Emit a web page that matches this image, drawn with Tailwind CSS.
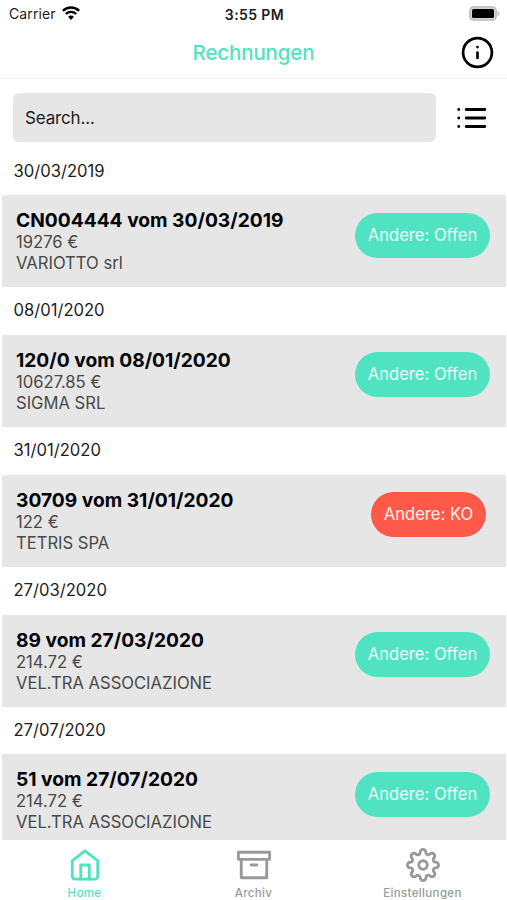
<!DOCTYPE html>
<html lang="de">
<head>
<meta charset="utf-8">
<title>Rechnungen</title>
<script src="https://cdn.jsdelivr.net/npm/@tailwindcss/browser@4"></script>
</head>
<body class="bg-white">
<div class="flex h-[900px] w-[507px] flex-col overflow-hidden bg-white font-['Inter','Liberation_Sans',sans-serif] text-[#1c1c1c]">
  <header class="h-[79px] shrink-0 border-b border-[#f0f0f0]">
    <div class="grid h-[27px] grid-cols-3 items-center pr-[7px] pl-[9px] text-[14px]">
      <div class="flex items-center gap-[6px]"><span class="tracking-[0.1px]">Carrier</span>
        <svg class="-mt-[2px] h-[14px] w-[18px]" viewBox="0 0 18 14" fill="none" stroke="#000" stroke-width="2.4"><path d="M.9 4.8a11.5 11.5 0 0 1 16.2 0M3.8 8a7.4 7.4 0 0 1 10.4 0"/><path d="M9 14 6.1 10.8a4.2 4.2 0 0 1 5.8 0z" fill="#000" stroke="none"/></svg>
      </div>
      <div class="pt-px text-center text-[14px] font-semibold tracking-[0.4px]">3:55 PM</div>
      <svg class="-mt-px h-[15px] w-[31px] justify-self-end" viewBox="0 0 31 15"><rect x=".8" y=".8" width="26.4" height="13.4" rx="3.8" fill="#d4d4d4" stroke="#b5b5b5" stroke-width="1.2"/><rect x="3" y="3" width="22" height="9" rx="1.5"/><path d="M28.6 5v5c2.4-.8 2.4-4.2 0-5z" fill="#b5b5b5"/></svg>
    </div>
    <div class="grid h-[51px] grid-cols-[1fr_auto_1fr] items-center pr-[13px] pl-[13px]">
      <span></span>
      <h1 class="pt-[2px] text-[20.5px] font-medium tracking-[-0.15px] text-[#50e3c2]">Rechnungen</h1>
      <svg class="h-[33px] w-[33px] justify-self-end" viewBox="0 0 33 33" fill="none" stroke="#000" stroke-width="2.7" stroke-linecap="round"><circle cx="16.5" cy="16.5" r="14.4"/><path d="M16.5 16.5v5.5M16.5 11v.1"/></svg>
    </div>
  </header>
  <div class="flex h-[68.6px] shrink-0 items-center pt-[9px] pr-[20px] pl-[13px]">
    <div class="flex h-[49px] w-[423px] items-center rounded-[6px] bg-[#e6e6e6] pt-[2px] pl-[12px] text-[17px] tracking-[-0.15px]">Search...</div>
    <svg class="ml-auto h-[30px] w-[31px]" viewBox="0 0 31 30" fill="none" stroke="#000" stroke-width="2.8" stroke-linecap="round"><path d="M10.2 6.5h18.6M10.2 15h18.6M10.2 23.5h18.6M2.7 6.5h.1M2.7 15h.1M2.7 23.5h.1"/></svg>
  </div>
  <main id="list" class="min-h-0 flex-1 overflow-hidden"></main>
  <nav class="grid h-[60px] shrink-0 grid-cols-3 bg-white text-[11.5px] font-medium tracking-[0.35px] text-[#999]">
    <div class="flex flex-col items-center pt-[7px] text-[#50e3c2]">
      <svg class="h-[36px] w-[34px]" viewBox="0 0 24 24" fill="none" stroke="currentColor" stroke-width="2" stroke-linecap="round" stroke-linejoin="round"><path d="M3 9l9-7 9 7v11a2 2 0 0 1-2 2H5a2 2 0 0 1-2-2z"/><path d="M9 22V12h6v10"/></svg>
      <span class="pt-px leading-[18px]">Home</span>
    </div>
    <div class="flex flex-col items-center pt-[7px]">
      <svg class="h-[36px] w-[34px]" viewBox="0 0 24 24" fill="none" stroke="currentColor" stroke-width="2" stroke-linecap="round" stroke-linejoin="round"><path d="M21 8v13H3V8M1 3h22v5H1zM10 12h4"/></svg>
      <span class="pt-px leading-[18px]">Archiv</span>
    </div>
    <div class="flex flex-col items-center pt-[7px]">
      <svg class="h-[36px] w-[34px]" viewBox="0 0 24 24" fill="none" stroke="currentColor" stroke-width="2" stroke-linecap="round" stroke-linejoin="round"><circle cx="12" cy="12" r="3"/><path d="M19.4 15a1.65 1.65 0 0 0 .33 1.82l.06.06a2 2 0 0 1 0 2.83 2 2 0 0 1-2.83 0l-.06-.06a1.65 1.65 0 0 0-1.82-.33 1.65 1.65 0 0 0-1 1.51V21a2 2 0 0 1-2 2 2 2 0 0 1-2-2v-.09A1.65 1.65 0 0 0 9 19.4a1.65 1.65 0 0 0-1.82.33l-.06.06a2 2 0 0 1-2.83 0 2 2 0 0 1 0-2.83l.06-.06a1.65 1.65 0 0 0 .33-1.82 1.65 1.65 0 0 0-1.51-1H3a2 2 0 0 1-2-2 2 2 0 0 1 2-2h.09A1.65 1.65 0 0 0 4.6 9a1.65 1.65 0 0 0-.33-1.82l-.06-.06a2 2 0 0 1 0-2.83 2 2 0 0 1 2.83 0l.06.06a1.65 1.65 0 0 0 1.82.33H9a1.65 1.65 0 0 0 1-1.51V3a2 2 0 0 1 2-2 2 2 0 0 1 2 2v.09a1.65 1.65 0 0 0 1 1.51 1.65 1.65 0 0 0 1.82-.33l.06-.06a2 2 0 0 1 2.83 0 2 2 0 0 1 0 2.83l-.06.06a1.65 1.65 0 0 0-.33 1.82V9a1.65 1.65 0 0 0 1.51 1H21a2 2 0 0 1 2 2 2 2 0 0 1-2 2h-.09a1.65 1.65 0 0 0-1.51 1z"/></svg>
      <span class="pt-px leading-[18px]">Einstellungen</span>
    </div>
  </nav>
</div>
<script>
const invoices = [
  ["CN004444", "30/03/2019", "19276 €", "VARIOTTO srl", true],
  ["120/0", "08/01/2020", "10627.85 €", "SIGMA SRL", true],
  ["30709", "31/01/2020", "122 €", "TETRIS SPA", false],
  ["89", "27/03/2020", "214.72 €", "VEL.TRA ASSOCIAZIONE", true],
  ["51", "27/07/2020", "214.72 €", "VEL.TRA ASSOCIAZIONE", true]
];
document.getElementById("list").innerHTML = invoices.map(([no, date, sum, name, open]) => `
  <section>
    <h2 class="h-[47.75px] pl-[13.5px] text-[16.6px] leading-[47.5px]">${date}</h2>
    <div class="mr-px ml-[2px] flex h-[92px] items-start justify-between bg-[#e6e6e6] pt-[14px] pl-[14px]">
      <div class="text-[16.6px] leading-[21px] text-[#484848]">
        <div class="text-[19.2px] leading-[23px] font-bold text-black">${no} vom ${date}</div>
        <div>${sum}</div>
        <div>${name}</div>
      </div>
      <div class="${open ? "mr-[16px] w-[135px] bg-[#50e3c2]" : "mr-[20px] w-[115px] bg-[#ff594a]"} mt-[3.3px] flex h-[45px] items-center justify-center rounded-full text-[16.6px] text-white/90">Andere: ${open ? "Offen" : "KO"}</div>
    </div>
  </section>`).join("");
</script>
</body>
</html>
